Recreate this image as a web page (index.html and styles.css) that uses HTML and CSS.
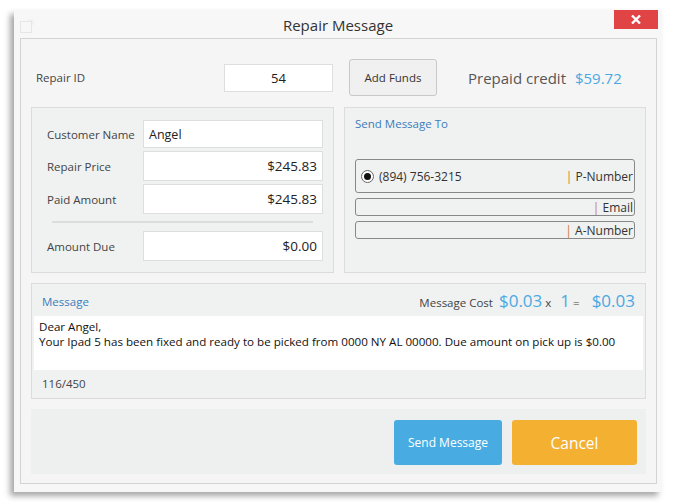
FILE: index.html
```html
<!DOCTYPE html>
<html>
<head>
<meta charset="utf-8">
<link rel="stylesheet" href="styles.css">
</head>
<body>
<div class="window">
  <div class="titlebar">
    <svg class="appicon" width="14" height="14" viewBox="0 0 14 14"><rect x="0.5" y="2.5" width="11" height="11" fill="none" stroke="#e6e6e6"/><path d="M8 1 L13 1 L13 6" fill="none" stroke="#ececec"/></svg>
    <div class="title">Repair Message</div>
    <div class="close"><svg width="10" height="9" viewBox="0 0 10 9"><path d="M1 0.5 L9 8.5 M9 0.5 L1 8.5" stroke="#fff" stroke-width="2.4"/></svg></div>
  </div>
  <div class="panel">
    <div class="toprow">
      <span class="lbl rid">Repair ID</span>
      <div class="field rid-field">54</div>
      <div class="btn-funds">Add Funds</div>
      <div class="credit">Prepaid credit <span class="credit-val">$59.72</span></div>
    </div>
    <div class="groups">
      <div class="group gleft">
        <div class="frow r1"><span class="lbl">Customer Name</span><div class="field name">Angel</div></div>
        <div class="frow r2"><span class="lbl">Repair Price</span><div class="field money">$245.83</div></div>
        <div class="frow r3"><span class="lbl">Paid Amount</span><div class="field money">$245.83</div></div>
        <div class="sep"></div>
        <div class="frow r4"><span class="lbl">Amount Due</span><div class="field money">$0.00</div></div>
      </div>
      <div class="group gright">
        <div class="gtitle">Send Message To</div>
        <div class="opt pnum">
          <span class="radio"><span class="dot"></span></span>
          <span class="phone">(894) 756-3215</span>
          <span class="tag"><span class="bar">|</span> P-Number</span>
        </div>
        <div class="opt small"><span class="tag"><span class="bar">|</span> Email</span></div>
        <div class="opt small"><span class="tag"><span class="bar">|</span> A-Number</span></div>
      </div>
    </div>
    <div class="message">
      <div class="mhead">
        <span class="gtitle mt">Message</span>
        <span class="cost">
          <span class="cost-lbl">Message Cost</span>
          <span class="big">$0.03</span><span class="op">x</span>
          <span class="big one">1</span><span class="op">=</span>
          <span class="big total">$0.03</span>
        </span>
      </div>
      <div class="mtext">Dear Angel,<br>Your Ipad 5 has been fixed and ready to be picked from 0000 NY AL 00000. Due amount on pick up is $0.00</div>
      <div class="counter">116/450</div>
    </div>
    <div class="footer">
      <div class="btn send">Send Message</div>
      <div class="btn cancel">Cancel</div>
    </div>
  </div>
</div>
</body>
</html>
```

FILE: styles.css
```css
* { box-sizing: border-box; }
html, body { margin: 0; padding: 0; background: #ffffff; }
body {
  font-family: "Open Sans", "Noto Sans", sans-serif;
  color: #333;
  padding: 10px 0 0 14px;
  width: 677px;
  height: 502px;
  overflow: hidden;
}
.window {
  width: 648px;
  height: 482px;
  background: #f7f7f7;
  box-shadow: -4px 4px 6px rgba(0,0,0,0.35);
  position: relative;
}
.titlebar {
  height: 28px;
  display: flex;
  align-items: center;
  justify-content: center;
}
.appicon { position: absolute; left: 6px; top: 9px; }
.title { font-size: 15px; color: #333; margin-top: 2px; }
.close {
  position: absolute;
  right: 4px;
  top: 0;
  width: 44px;
  height: 19px;
  background: #e04444;
  display: flex;
  align-items: center;
  justify-content: center;
}
.panel {
  margin: 0 5px 0 6px;
  height: 446px;
  border: 1px solid #d3d3d3;
  background: #f5f5f5;
  padding: 20px 10px 0 10px;
}
.lbl { font-size: 11.5px; color: #444; }
.toprow {
  height: 37px;
  display: flex;
  align-items: center;
}
.rid { margin-left: 5px; width: 188px; }
.field {
  background: #fff;
  border: 1px solid #dedede;
  display: flex;
  align-items: center;
  font-size: 13px;
  color: #222;
}
.rid-field { width: 109px; height: 28px; justify-content: center; }
.btn-funds {
  margin-left: 16px;
  width: 88px;
  height: 37px;
  border: 1px solid #c9c9c9;
  border-radius: 3px;
  background: #f0f0f0;
  font-size: 11.5px;
  color: #333;
  display: flex;
  align-items: center;
  justify-content: center;
}
.credit { margin-left: 31px; font-size: 15px; color: #555; }
.credit-val { color: #4aa9e2; margin-left: 5px; }
.groups {
  margin-top: 11px;
  display: flex;
  gap: 10px;
  height: 166px;
}
.group {
  border: 1px solid #dcdcdc;
  background: #f0f1f1;
}
.gleft { width: 303px; padding: 12px 10px 0 15px; }
.gright { width: 302px; padding: 7px 10px 0 10px; }
.frow { display: flex; align-items: center; }
.frow .lbl { width: 96px; }
.frow .field { width: 180px; height: 30px; }
.r1 .field { height: 28px; }
.r1, .r2 { margin-bottom: 3px; }
.name { padding-left: 5px; font-size: 12.5px; }
.money { justify-content: flex-end; padding-right: 5px; font-size: 13.5px; }
.sep {
  height: 2px;
  background: #dcdcdc;
  margin: 7px 10px 8px 5px;
}
.gtitle { font-size: 11.5px; color: #3b7dbd; line-height: 17px; }
.opt {
  border: 1px solid #888;
  border-radius: 3px;
  display: flex;
  align-items: center;
  font-size: 12px;
  color: #333;
}
.pnum { margin-top: 27px; height: 34px; padding-left: 5px; }
.small { margin-top: 5px; height: 18px; justify-content: flex-end; }
.radio {
  width: 13px; height: 13px;
  border: 1px solid #666;
  border-radius: 50%;
  background: #fff;
  display: flex;
  align-items: center;
  justify-content: center;
}
.dot { width: 7px; height: 7px; border-radius: 50%; background: #111; }
.phone { margin-left: 5px; }
.tag { margin-left: auto; padding-right: 1px; }
.bar { color: #c87a34; }
.message {
  margin-top: 10px;
  height: 116px;
  border: 1px solid #dcdcdc;
  background: #f0f1f1;
  padding: 0 2px;
}
.mhead {
  height: 32px;
  display: flex;
  align-items: center;
  justify-content: space-between;
  padding: 0 8px 0 8px;
}
.mt { margin-top: 2px; }
.cost { display: flex; align-items: baseline; }
.cost-lbl { font-size: 11.5px; color: #444; margin-right: 6px; }
.big { font-size: 17px; color: #4aa9e2; }
.op { font-size: 11.5px; color: #444; margin: 0 4px 0 3px; }
.one { margin-left: 5px; }
.total { margin-left: 8px; }
.mtext {
  background: #fff;
  height: 54px;
  padding: 3px 5px;
  font-size: 11.6px;
  line-height: 15px;
  color: #111;
}
.counter { font-size: 11.5px; color: #444; padding: 6px 8px 0; }
.footer {
  margin-top: 10px;
  height: 65px;
  background: #eef0ef;
  display: flex;
  justify-content: flex-end;
  align-items: flex-start;
  padding: 11px 9px 0 0;
  gap: 10px;
}
.btn {
  height: 45px;
  border-radius: 3px;
  color: #fff;
  display: flex;
  align-items: center;
  justify-content: center;
}
.send { width: 108px; background: #48ace2; font-size: 12px; }
.cancel { width: 125px; background: #f4b031; font-size: 15.5px; }
```
